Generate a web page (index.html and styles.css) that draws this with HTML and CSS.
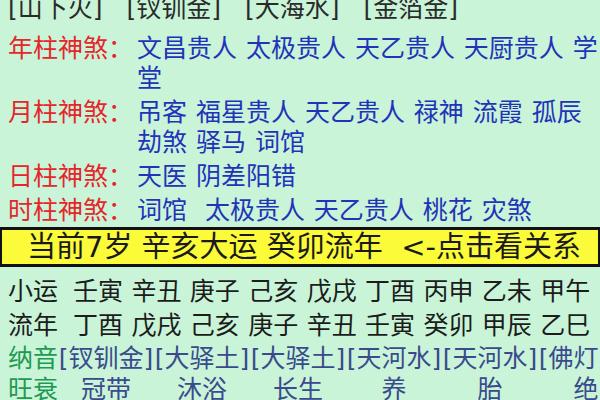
FILE: index.html
```html
<!DOCTYPE html>
<html lang="zh">
<head>
<meta charset="utf-8">
<title>神煞</title>
<link rel="stylesheet" href="styles.css">
</head>
<body>
<div class="page">
  <div class="top-nayin">
    <span>[山下火]</span><span>[钗钏金]</span><span>[大海水]</span><span>[金箔金]</span>
  </div>
  <div class="shensha">
    <div class="ss-row"><span class="ss-label">年柱神煞：</span><span class="ss-val">文昌贵人 太极贵人 天乙贵人 天厨贵人 学堂</span></div>
    <div class="ss-row"><span class="ss-label">月柱神煞：</span><span class="ss-val">吊客 福星贵人 天乙贵人 禄神 流霞 孤辰 劫煞 驿马 词馆</span></div>
    <div class="ss-row"><span class="ss-label">日柱神煞：</span><span class="ss-val">天医 阴差阳错</span></div>
    <div class="ss-row"><span class="ss-label">时柱神煞：</span><span class="ss-val">词馆&nbsp; 太极贵人 天乙贵人 桃花 灾煞</span></div>
  </div>
  <div class="dayun-bar">当前7岁 辛亥大运 癸卯流年&nbsp; &lt;-点击看关系</div>
  <div class="gz-row">
    <span class="gz-label">小运</span>
    <span>壬寅</span><span>辛丑</span><span>庚子</span><span>己亥</span><span>戊戌</span><span>丁酉</span><span>丙申</span><span>乙未</span><span>甲午</span>
  </div>
  <div class="gz-row">
    <span class="gz-label">流年</span>
    <span>丁酉</span><span>戊戌</span><span>己亥</span><span>庚子</span><span>辛丑</span><span>壬寅</span><span>癸卯</span><span>甲辰</span><span>乙巳</span>
  </div>
  <div class="grid-table">
    <span class="gt-label">纳音</span>
    <span class="gt-cell">[钗钏金]</span>
    <span class="gt-cell">[大驿土]</span>
    <span class="gt-cell">[大驿土]</span>
    <span class="gt-cell">[天河水]</span>
    <span class="gt-cell">[天河水]</span>
    <span class="gt-cell">[佛灯火]</span>
    <span class="gt-label">旺衰</span>
    <span class="gt-cell">冠带</span>
    <span class="gt-cell">沐浴</span>
    <span class="gt-cell">长生</span>
    <span class="gt-cell">养</span>
    <span class="gt-cell">胎</span>
    <span class="gt-cell">绝</span>
  </div>
</div>
</body>
</html>
```

FILE: styles.css
```css
html, body {
  margin: 0;
  padding: 0;
  background: #c9f4d8;
  overflow: hidden;
}
body {
  width: 600px;
  height: 400px;
  font-family: "DejaVu Sans", "Noto Sans CJK SC", sans-serif;
  font-size: 25px;
  color: #1c1c1c;
}
.page {
  padding-left: 8px;
}
.top-nayin {
  display: flex;
  gap: 24px;
  line-height: 30px;
  margin-top: -6px;
  margin-bottom: 8px;
  white-space: nowrap;
  color: #2a2a2a;
}
.shensha {
  display: flex;
  flex-direction: column;
}
.ss-row {
  display: flex;
  padding: 2px 0;
  line-height: 30px;
}
.ss-label {
  flex: 0 0 125px;
  color: #e5262a;
  white-space: nowrap;
}
.ss-val {
  margin-left: 4px;
  flex: 1;
  color: #2233b8;
  word-spacing: 1px;
}
.dayun-bar {
  margin-left: -8px;
  margin-top: -1px;
  height: 34px;
  line-height: 34px;
  background: #fbfb3a;
  border: 3px solid #111;
  border-left-width: 2px;
  border-right-width: 2px;
  font-size: 29px;
  text-align: center;
  white-space: nowrap;
  color: #1a1a1a;
  padding-left: 8px;
}
.gz-row {
  display: flex;
  gap: 8.4px;
  line-height: 34px;
  white-space: nowrap;
}
.dayun-bar + .gz-row {
  margin-top: 8px;
}
.gz-label {
  margin-right: 6.6px;
}
.grid-table {
  display: grid;
  grid-template-columns: 50px repeat(6, 96px);
  line-height: 31px;
  white-space: nowrap;
}
.gt-label {
  color: #1f9a52;
}
.gt-cell {
  text-align: center;
  color: #3a4a8c;
}
```
